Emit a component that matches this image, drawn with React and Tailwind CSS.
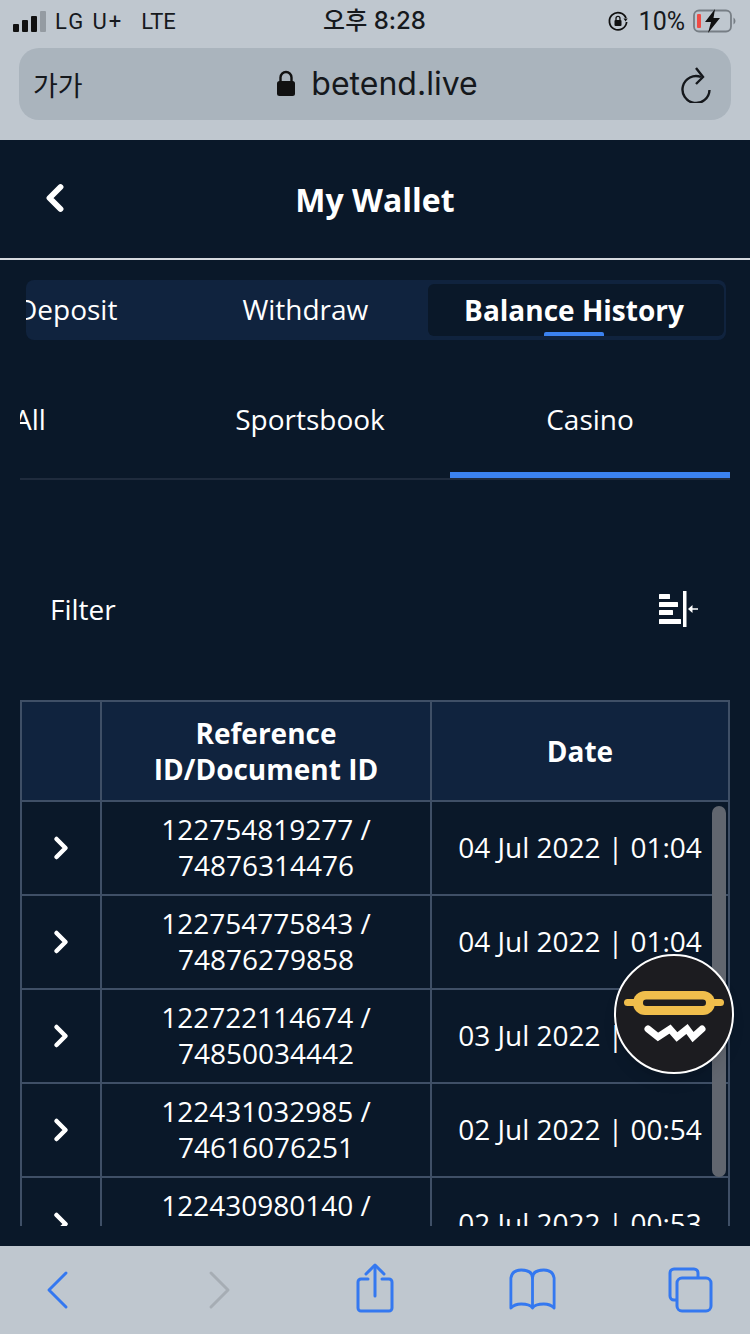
import { ChevronLeft, ChevronRight } from 'lucide-react';

const rows = [
  { id: '122754819277 /', doc: '74876314476', date: '04 Jul 2022 | 01:04' },
  { id: '122754775843 /', doc: '74876279858', date: '04 Jul 2022 | 01:04' },
  { id: '122722114674 /', doc: '74850034442', date: '03 Jul 2022 | 01:04' },
  { id: '122431032985 /', doc: '74616076251', date: '02 Jul 2022 | 00:54' },
  { id: '122430980140 /', doc: '74616033012', date: '02 Jul 2022 | 00:53' },
];

const StatusBar = () => (
  <div className="h-[48px] pb-[6px] flex items-center justify-between pl-[13px] pr-[14px] text-[#16191d]">
    <div className="flex items-center w-[230px]">
      <div className="flex items-end gap-[3px] h-[21px] mr-[9px]">
        <div className="w-[6px] h-[8px] rounded-[1px] bg-[#111]"></div>
        <div className="w-[6px] h-[12px] rounded-[1px] bg-[#111]"></div>
        <div className="w-[6px] h-[16px] rounded-[1px] bg-[#111]"></div>
        <div className="w-[6px] h-[21px] rounded-[1px] bg-[#949ba2]"></div>
      </div>
      <span className="font-['Roboto',sans-serif] text-[22px] tracking-[2px] mr-[18px]">LG U+</span>
      <span className="font-['Roboto',sans-serif] text-[22px]">LTE</span>
    </div>
    <div className="font-['Inter','Noto_Sans_CJK_KR',sans-serif] font-medium text-[24px] leading-none">오후 8:28</div>
    <div className="flex items-center justify-end w-[230px]">
      <svg width="22" height="22" viewBox="0 0 22 22" fill="none" className="mr-[10px]">
        <path d="M19 8A8.600 8.600 0 1 0 19.600 12" stroke="#111" strokeWidth="1.800" />
        <path d="M16.500 8.500h4.200l-2.100 3z" fill="#111" />
        <rect x="7.500" y="10" width="7" height="6" rx="1" fill="#111" />
        <path d="M9 10V8.400a2 2 0 0 1 4 0V10" stroke="#111" strokeWidth="1.300" />
      </svg>
      <span className="font-['Roboto',sans-serif] text-[25px] leading-none mr-[8px]">10%</span>
      <svg width="43" height="24" viewBox="0 0 43 24" fill="none">
        <rect x="1" y="1.500" width="37" height="21" rx="5" stroke="#777e85" strokeWidth="1.800" />
        <path d="M40.500 8.500v7a4 4 0 0 0 2-3.500 4 4 0 0 0-2-3.500z" fill="#777e85" />
        <rect x="4" y="5" width="4" height="14" rx="1" fill="#ef4b45" />
        <path d="M22 0 12 13h6l-3 11 12-15h-6.500z" fill="#111" />
      </svg>
    </div>
  </div>
);

const UrlBar = () => (
  <div className="mx-[19px] h-[72px] rounded-[20px] bg-[#aab4bd] flex items-center justify-between pl-[14px] pr-[18px] text-[#15181c]">
    <span className="font-['Noto_Sans_CJK_KR',sans-serif] text-[27px] leading-none w-[110px]">가가</span>
    <div className="flex items-center gap-[15px] ml-[-2px]">
      <svg width="20" height="30" viewBox="0 0 20 30" fill="none">
        <path d="M4.500 13V8.500a5.500 5.500 0 0 1 11 0V13" stroke="#111" strokeWidth="2.400" />
        <rect x="1" y="12" width="18" height="15" rx="2.500" fill="#111" />
      </svg>
      <span className="font-['Inter',sans-serif] text-[32px] leading-none">betend.live</span>
    </div>
    <div className="w-[100px] flex justify-end">
      <svg width="32" height="38" viewBox="0 0 32 38" fill="none" stroke="#15181c" strokeWidth="2.400">
        <path d="M20 12A13.500 13.500 0 1 0 28.500 25" />
        <path d="M15 3l7 9-7 7" />
      </svg>
    </div>
  </div>
);

const BetLogo = () => (
  <div className="absolute left-[614px] top-[954px] w-[120px] h-[120px] rounded-full bg-[#1c1c20] border-2 border-white flex items-center justify-center shadow-lg z-20">
    <svg width="104" height="70" viewBox="0 0 104 70" fill="none" className="shrink-0">
      <rect x="2" y="20" width="100" height="7" rx="3.500" fill="#f0be4c" />
      <rect x="11" y="12" width="82" height="24" rx="12" fill="#f0be4c" />
      <rect x="21" y="20.500" width="63" height="6.500" rx="3.200" fill="#1c1c20" />
      <path d="M26 50l10 8 12-8 7 8 10-8 6 8 9-8" stroke="#fff" strokeWidth="7" strokeLinecap="round" />
    </svg>
  </div>
);

const FilterIcon = () => (
  <svg width="42" height="38" viewBox="0 0 42 38" fill="none">
    <rect x="1" y="3" width="11" height="5" rx="0.500" fill="#fff" />
    <rect x="1" y="11" width="19" height="5" rx="0.500" fill="#fff" />
    <rect x="1" y="19" width="14" height="5" rx="0.500" fill="#fff" />
    <rect x="1" y="28" width="22" height="5" rx="0.500" fill="#fff" />
    <rect x="25" y="0" width="3.500" height="36" fill="#fff" />
    <path d="M33 18h7" stroke="#fff" strokeWidth="1.500" />
    <path d="M30 18l4.500-4v8z" fill="#fff" />
  </svg>
);

const BottomBar = () => (
  <div className="h-[88px] bg-[#bfc7cf] flex items-start">
    <svg width="26" height="40" viewBox="0 0 26 40" fill="none" stroke="#3478f0" strokeWidth="3" strokeLinecap="round" strokeLinejoin="round" className="ml-[46px] mt-[24px]">
      <path d="M20 3 3 20l17 17" />
    </svg>
    <svg width="26" height="40" viewBox="0 0 26 40" fill="none" stroke="#a6adb4" strokeWidth="3" strokeLinecap="round" strokeLinejoin="round" className="ml-[136px] mt-[24px]">
      <path d="M3 3l17 17L3 37" />
    </svg>
    <svg width="40" height="50" viewBox="0 0 40 50" fill="none" stroke="#3478f0" strokeWidth="3" strokeLinecap="round" strokeLinejoin="round" className="ml-[121px] mt-[17px]">
      <path d="M13 16H6a3 3 0 0 0-3 3v26a3 3 0 0 0 3 3h28a3 3 0 0 0 3-3V19a3 3 0 0 0-3-3h-7" />
      <path d="M20 33V3" />
      <path d="M11 11l9-9 9 9" />
    </svg>
    <svg width="47" height="42" viewBox="0 0 50 42" fill="none" preserveAspectRatio="none" stroke="#3478f0" strokeWidth="3" strokeLinejoin="round" className="ml-[114px] mt-[22px]">
      <path d="M25 10C25 4 20 2 13 2 7 2 3 4 2 10v30c3-3 7-4 11-4 6 0 10 1 12 4 2-3 6-4 12-4 4 0 8 1 11 4V10C47 4 43 2 37 2 30 2 25 4 25 10z" />
      <path d="M25 10v30" />
    </svg>
    <svg width="46" height="46" viewBox="0 0 46 46" fill="none" stroke="#3478f0" strokeWidth="3" strokeLinejoin="round" className="ml-[112px] mt-[21px]">
      <path d="M8 33H6a4 4 0 0 1-4-4V6a4 4 0 0 1 4-4h20a4 4 0 0 1 4 4v4" />
      <rect x="9" y="11" width="34" height="33" rx="5" />
    </svg>
  </div>
);

const App = () => {
  return (
    <div className="relative w-[750px] h-[1334px] overflow-hidden bg-[#0a1829] text-white font-['Open_Sans',sans-serif]">
      <div className="h-[140px] bg-[#bfc7cf]">
        <StatusBar />
        <UrlBar />
      </div>

      <div className="relative h-[120px] border-b-2 border-[#d5d9de] flex items-center justify-center">
        <ChevronLeft size={44} strokeWidth={3.2} className="absolute left-[33px] top-[36px] text-white" />
        <h1 className="text-[32px] font-bold leading-none mt-[2px]">My Wallet</h1>
      </div>

      <div className="mt-[20px] mx-[26px] w-[700px] h-[60px] rounded-[8px] bg-[#10233e] overflow-hidden flex items-start">
        <div className="w-[402px] shrink-0 h-full flex items-center text-[28px] leading-none pb-[2px]">
          <span className="ml-[-9px]">Deposit</span>
          <span className="ml-[125px]">Withdraw</span>
        </div>
        <div className="relative mt-[4px] w-[296px] h-[52px] rounded-[6px] bg-[#0a1829] flex items-center justify-center">
          <span className="text-[28px] font-bold leading-none mt-[-1px] ml-[-4px]">Balance History</span>
          <div className="absolute bottom-0 left-[116px] w-[60px] h-[4px] rounded-t-[2px] bg-[#3b82f0]"></div>
        </div>
      </div>

      <div className="mt-[40px] mx-[20px] h-[100px] relative border-b-2 border-[#1f2b3d]">
        <div className="grid grid-cols-[150px_280px_280px] h-full text-[28px] leading-none overflow-hidden">
          <div className="flex items-center pb-[20px]"><span className="ml-[-6px]">All</span></div>
          <div className="flex items-center justify-center pb-[20px]">Sportsbook</div>
          <div className="flex items-center justify-center pb-[20px]">Casino</div>
        </div>
        <div className="absolute right-0 bottom-0 w-[280px] h-[6px] bg-[#3b82f0]"></div>
      </div>

      <div className="mt-[90px] h-[80px] pl-[50px] pr-[50px] flex items-center justify-between">
        <span className="text-[28px] leading-none mt-[-2px]">Filter</span>
        <FilterIcon />
      </div>

      <div className="relative mt-[50px] mx-[20px] h-[526px] overflow-hidden">
        <div className="grid grid-cols-[80px_330px_1fr] h-[102px] bg-[#10233e] border-2 border-[#3f4f66] text-[28px] font-bold leading-[36px] text-center">
          <div className="border-r-2 border-[#3f4f66]"></div>
          <div className="border-r-2 border-[#3f4f66] flex items-center justify-center pb-[1px]">Reference<br />ID/Document ID</div>
          <div className="flex items-center justify-center">Date</div>
        </div>
        {rows.map((r) => (
          <div key={r.id} className="grid grid-cols-[80px_330px_1fr] h-[94px] border-x-2 border-b-2 border-[#3f4f66] text-[28px] leading-[36px] text-center">
            <div className="border-r-2 border-[#3f4f66] flex items-center justify-center">
              <ChevronRight size={36} strokeWidth={3} className="text-white" />
            </div>
            <div className="border-r-2 border-[#3f4f66] flex items-center justify-center pb-[2px]">
              <span>{r.id}<br />{r.doc}</span>
            </div>
            <div className="flex items-center justify-center pb-[2px]">{r.date}</div>
          </div>
        ))}
        <div className="absolute left-[692px] top-[106px] w-[14px] h-[371px] rounded-full bg-[#61666f]"></div>
      </div>

      <div className="h-[20px]"></div>
      <BottomBar />
      <BetLogo />
    </div>
  );
};

export default App;
